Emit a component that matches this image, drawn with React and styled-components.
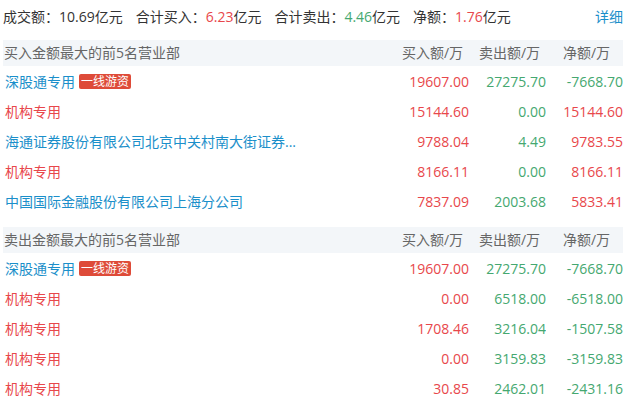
import React from 'react'
import styled, { createGlobalStyle } from 'styled-components';

const GlobalStyle = createGlobalStyle`
  body {
    margin: 0;
    background: #fff;
    font-family: "Open Sans", "Noto Sans CJK SC", sans-serif;
    font-size: 14px;
  }
`;

const RED = '#e8474b';
const GREEN = '#45a870';
const BLUE = '#1b8fca';

const Wrap = styled.div`
  width: 620px;
  padding: 0 6px 0 3px;
`;

const Summary = styled.div`
  display: flex;
  align-items: center;
  height: 32px;
  color: #333;
`;

const Stat = styled.span`
  margin-right: 13px;
  white-space: nowrap;
`;

const Num = styled.span`
  color: ${p => p.$color};
`;

const More = styled.a`
  margin-left: auto;
  color: ${BLUE};
  text-decoration: none;
  cursor: pointer;
`;

const Table = styled.div`
  display: grid;
  grid-template-columns: 1fr 77px 77px 77px;
  margin-top: 8px;
`;

const HeadCell = styled.div`
  background: #f3f6f9;
  height: 26px;
  line-height: 26px;
  color: #666;
  white-space: nowrap;
  padding-left: ${p => (p.$first ? '1px' : '4px')};
  text-align: ${p => (p.$first ? 'left' : 'center')};
  margin-top: ${p => (p.$gap ? '11px' : '0')};
`;

const Cell = styled.div`
  height: 30px;
  white-space: nowrap;
  overflow: hidden;
  color: ${p => p.$color};
  padding-left: ${p => (p.$right ? '0' : '2px')};
  display: flex;
  align-items: center;
  justify-content: ${p => (p.$right ? 'flex-end' : 'flex-start')};
`;

const Tag = styled.span`
  display: inline-block;
  margin-left: 4px;
  background: #de4b39;
  color: #fff;
  font-size: 12px;
  line-height: 15px;
  padding: 0 2px;
  border-radius: 2px;
`;

const buyRows = [
  { name: '深股通专用', tag: true, buy: '19607.00', sell: '27275.70', net: '-7668.70' },
  { name: '机构专用', buy: '15144.60', sell: '0.00', net: '15144.60' },
  { name: '海通证券股份有限公司北京中关村南大街证券...', buy: '9788.04', sell: '4.49', net: '9783.55' },
  { name: '机构专用', buy: '8166.11', sell: '0.00', net: '8166.11' },
  { name: '中国国际金融股份有限公司上海分公司', buy: '7837.09', sell: '2003.68', net: '5833.41' },
];

const sellRows = [
  { name: '深股通专用', tag: true, buy: '19607.00', sell: '27275.70', net: '-7668.70' },
  { name: '机构专用', buy: '0.00', sell: '6518.00', net: '-6518.00' },
  { name: '机构专用', buy: '1708.46', sell: '3216.04', net: '-1507.58' },
  { name: '机构专用', buy: '0.00', sell: '3159.83', net: '-3159.83' },
  { name: '机构专用', buy: '30.85', sell: '2462.01', net: '-2431.16' },
];

const nameColor = name => (name === '机构专用' ? RED : BLUE);
const signColor = v => (v.startsWith('-') ? GREEN : RED);

function Section({ title, rows, gap }) {
  return (
    <>
      <HeadCell $first $gap={gap}>{title}</HeadCell>
      <HeadCell $gap={gap}>买入额/万</HeadCell>
      <HeadCell $gap={gap}>卖出额/万</HeadCell>
      <HeadCell $gap={gap}>净额/万</HeadCell>
      {rows.map((r, i) => (
        <React.Fragment key={i}>
          <Cell $color={nameColor(r.name)}>
            {r.name}
            {r.tag && <Tag>一线游资</Tag>}
          </Cell>
          <Cell $right $color={RED}>{r.buy}</Cell>
          <Cell $right $color={GREEN}>{r.sell}</Cell>
          <Cell $right $color={signColor(r.net)}>{r.net}</Cell>
        </React.Fragment>
      ))}
    </>
  );
}

export default function App() {
  return (
    <Wrap>
      <GlobalStyle />
      <Summary>
        <Stat>成交额：10.69亿元</Stat>
        <Stat>合计买入：<Num $color={RED}>6.23</Num>亿元</Stat>
        <Stat>合计卖出：<Num $color={GREEN}>4.46</Num>亿元</Stat>
        <Stat>净额：<Num $color={RED}>1.76</Num>亿元</Stat>
        <More>详细</More>
      </Summary>
      <Table>
        <Section title="买入金额最大的前5名营业部" rows={buyRows} />
        <Section title="卖出金额最大的前5名营业部" rows={sellRows} gap />
      </Table>
    </Wrap>
  );
}
